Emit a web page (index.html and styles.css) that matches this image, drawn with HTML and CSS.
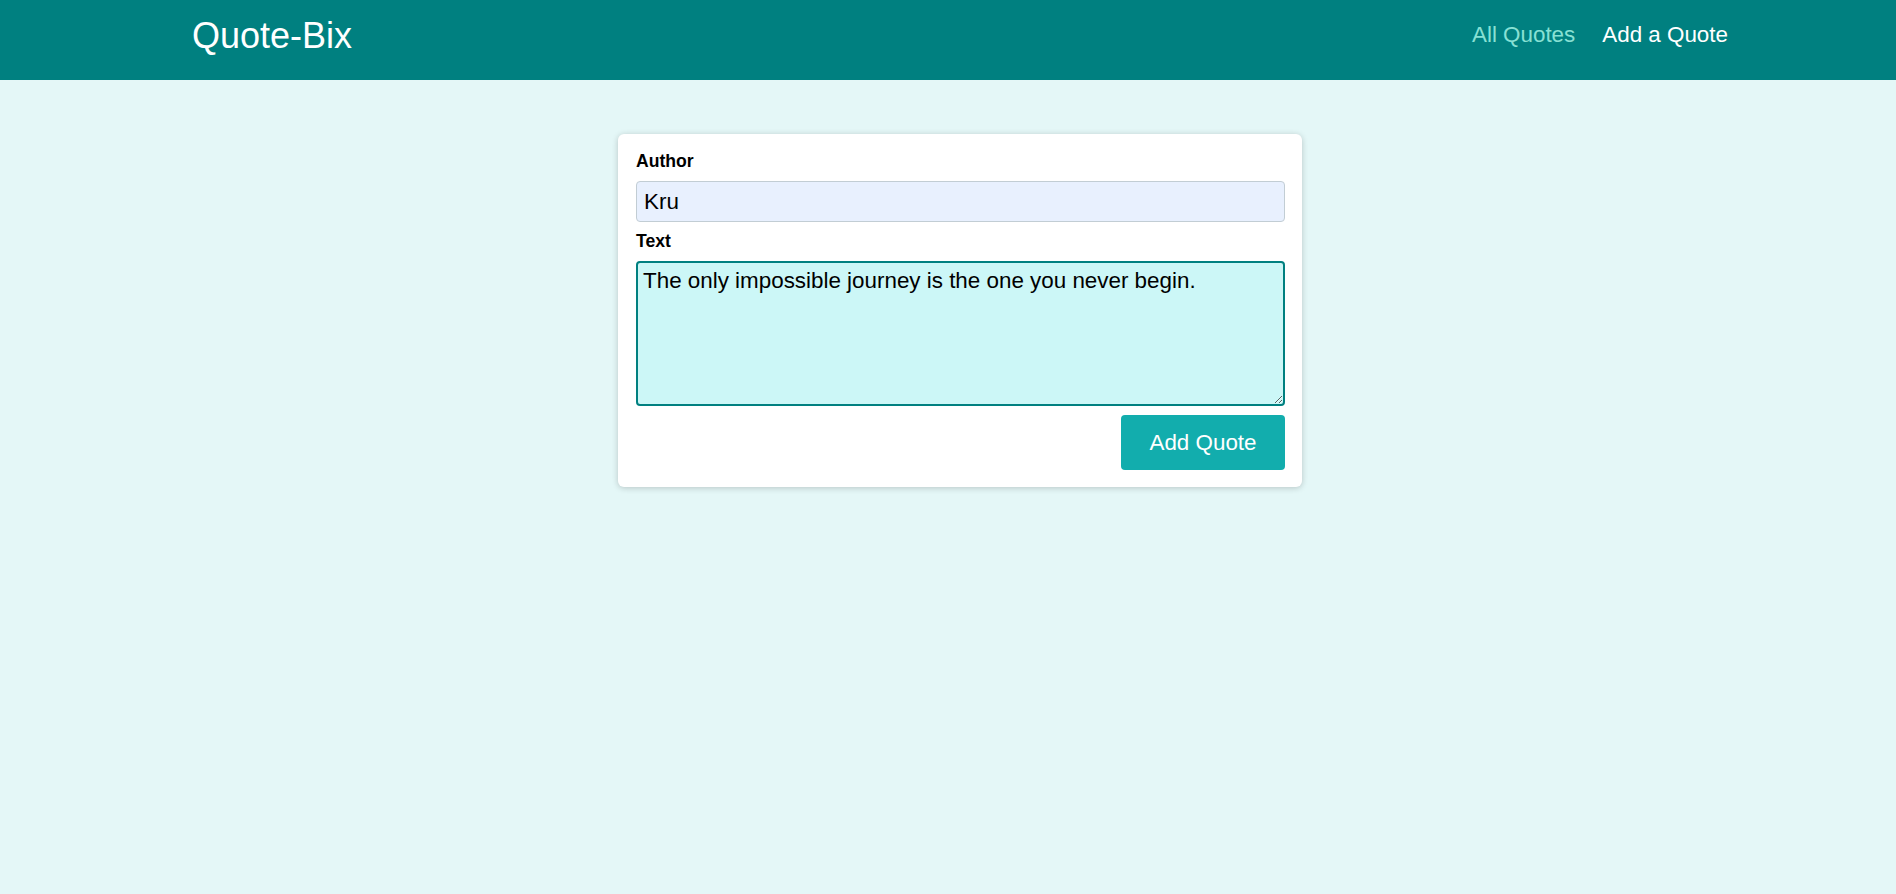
FILE: index.html
```html
<!DOCTYPE html>
<html lang="en">
<head>
<meta charset="utf-8">
<title>Quote-Bix</title>
<link rel="stylesheet" href="styles.css">
</head>
<body>
<header class="header">
  <div class="logo">Quote-Bix</div>
  <nav class="nav">
    <a class="nav-link active" href="#">All Quotes</a>
    <a class="nav-link" href="#">Add a Quote</a>
  </nav>
</header>
<main class="main">
  <form class="card">
    <div class="control">
      <label class="label" for="author">Author</label>
      <input class="input" id="author" type="text" value="Kru">
    </div>
    <div class="control">
      <label class="label" for="text">Text</label>
      <textarea class="textarea" id="text">The only impossible journey is the one you never begin.</textarea>
    </div>
    <div class="actions">
      <button class="btn" type="button">Add Quote</button>
    </div>
  </form>
</main>
</body>
</html>
```

FILE: styles.css
```css
* { box-sizing: border-box; }
html, body {
  margin: 0;
  padding: 0;
}
body {
  background: #e4f7f7;
  font-family: "Liberation Sans", Arial, sans-serif;
  height: 894px;
}
.header {
  height: 80px;
  background: #008080;
  display: flex;
  align-items: center;
  justify-content: space-between;
  padding: 0 168px 0 192px;
}
.logo {
  color: #ffffff;
  font-size: 36px;
  line-height: 1;
  margin-top: -9px;
}
.nav {
  display: flex;
  gap: 27px;
  margin-top: -10px;
}
.nav-link {
  color: #ffffff;
  text-decoration: none;
  font-size: 22.4px;
}
.nav-link.active {
  color: #88e0d4;
}
.main {
  display: flex;
  justify-content: center;
  padding: 54px 0 0 24px;
}
.card {
  width: 684px;
  background: #ffffff;
  border-radius: 6px;
  box-shadow: 0 1px 6px rgba(0, 0, 0, 0.2);
  padding: 17px 17px 17px 18px;
}
.control {
  margin-bottom: 9px;
}
.label {
  display: block;
  font-weight: bold;
  font-size: 17.6px;
  line-height: 20px;
  margin-bottom: 10px;
  color: #000;
}
.input, .textarea {
  display: block;
  width: 100%;
  font-family: "Liberation Sans", Arial, sans-serif;
  font-size: 22.4px;
  color: #000;
  border-radius: 4px;
}
.input {
  height: 41px;
  background: #e8f0fe;
  border: 1px solid #c2cdd4;
  padding: 0 7px;
}
.textarea {
  height: 145px;
  background: #ccf7f7;
  border: 2px solid #008080;
  padding: 5px 5px;
  outline: none;
  resize: vertical;
  line-height: 1.15;
}
.actions {
  display: flex;
  justify-content: flex-end;
}
.btn {
  height: 55px;
  width: 164px;
  background: #12adad;
  color: #ffffff;
  border: none;
  border-radius: 4px;
  font-family: "Liberation Sans", Arial, sans-serif;
  font-size: 22.4px;
  cursor: pointer;
}
```
